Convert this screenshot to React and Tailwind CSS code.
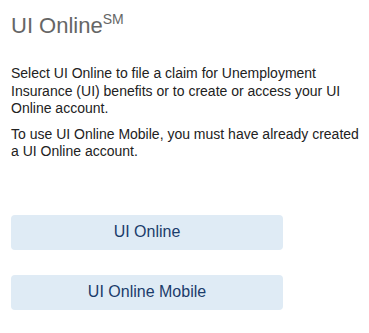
export default function App() {
  const font = { fontFamily: '"Liberation Sans", Arial, sans-serif' };
  return (
    <div className="min-h-[333px] bg-white pl-[11px] pr-[4px] pt-[13px]" style={font}>
      <h1 className="text-[22px] leading-[1.2] text-[#666666]">
        UI Online<sup className="relative top-[-1px] align-top text-[14px] leading-none">SM</sup>
      </h1>
      <div className="mt-[26px] text-[14px] leading-[17.5px] text-[#222222]">
        <p>
          Select UI Online to file a claim for Unemployment Insurance (UI) benefits or to create or access your UI Online
          account.
        </p>
        <p className="mt-[8px]">To use UI Online Mobile, you must have already created a UI Online account.</p>
      </div>
      <div className="mt-[54px] flex flex-col gap-[25px]">
        <button
          type="button"
          className="h-[35px] w-[272px] rounded-[4px] bg-[#dfebf5] text-[16px] text-[#1b3c6b]"
        >
          UI Online
        </button>
        <button
          type="button"
          className="h-[35px] w-[272px] rounded-[4px] bg-[#dfebf5] text-[16px] text-[#1b3c6b]"
        >
          UI Online Mobile
        </button>
      </div>
    </div>
  );
}
